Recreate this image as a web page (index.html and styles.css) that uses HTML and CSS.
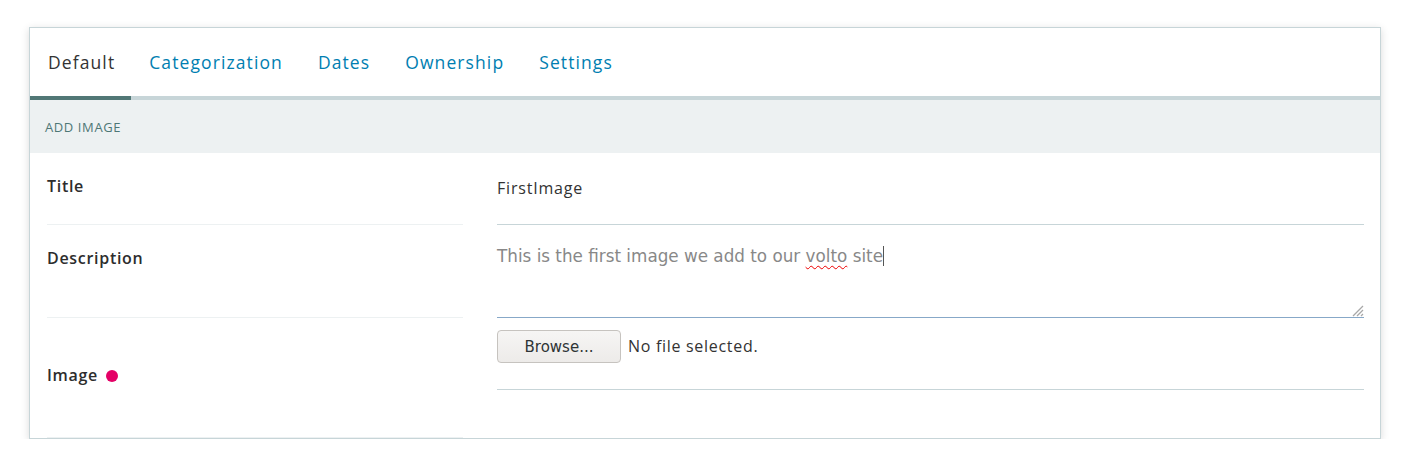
FILE: index.html
```html
<!DOCTYPE html>
<html>
<head>
<meta charset="utf-8">
<link rel="stylesheet" href="styles.css">
</head>
<body>
<div class="card">
  <div class="tabs">
    <div class="tab active">Default</div>
    <div class="tab">Categorization</div>
    <div class="tab">Dates</div>
    <div class="tab">Ownership</div>
    <div class="tab">Settings</div>
  </div>
  <div class="section-head">ADD IMAGE</div>
  <div class="form">
    <div class="row row-title">
      <div class="label">Title</div>
      <div class="field"><div class="text-input">FirstImage</div></div>
    </div>
    <div class="row row-desc">
      <div class="label">Description</div>
      <div class="field">
        <div class="textarea"><span class="ta-text">This is the first image we add to our <span class="spell">volto</span> site</span><span class="caret"></span>
          <svg class="grip" width="14" height="14" viewBox="0 0 14 14"><path d="M13 3 L3 13 M13 7 L7 13 M13 11 L11 13" stroke="#a8a8a8" stroke-width="1.3"/></svg>
        </div>
      </div>
    </div>
    <div class="row row-image">
      <div class="label">Image <span class="req"></span></div>
      <div class="field">
        <div class="file-line"><span class="browse">Browse...</span><span class="nofile">No file selected.</span></div>
      </div>
    </div>
  </div>
</div>
</body>
</html>
```
FILE: styles.css
```css
* { box-sizing: border-box; }
body {
  margin: 0;
  background: #fff;
  font-family: "Open Sans", "DejaVu Sans", sans-serif;
}
.card {
  margin: 27px 0 0 29px;
  width: 1352px;
  height: 412px;
  border: 1px solid #c7d5d8;
  background: #fff;
  box-shadow: 0 2px 8px rgba(0, 0, 0, 0.15);
}
.tabs {
  display: flex;
  height: 72px;
  border-bottom: 4px solid #c7d5d8;
}
.tab {
  padding: 0 17px 0 18px;
  height: 72px;
  display: flex;
  align-items: center;
  font-size: 17.5px;
  letter-spacing: 1.1px;
  color: #007eb1;
  margin-bottom: -4px;
  border-bottom: 4px solid transparent;
}
.tab.active {
  color: #333;
  border-bottom-color: #517776;
  padding-right: 16px;
}
.section-head {
  height: 53px;
  background: #edf1f2;
  color: #4e7776;
  font-size: 13px;
  letter-spacing: 0.6px;
  padding-left: 15px;
  display: flex;
  align-items: center;
}
.form {
  padding: 0 16px 0 17px;
}
.row {
  display: grid;
  grid-template-columns: 416px 1fr;
  column-gap: 34px;
}
.label {
  font-size: 16px;
  font-weight: 600;
  letter-spacing: 0.7px;
  color: #2d2d2d;
  border-bottom: 1px solid #edf1f2;
}
.row-title .label { height: 72px; padding-top: 22px; }
.row-desc .label { height: 93px; padding-top: 22px; }
.row-image .label { height: 120px; padding-top: 46px; display: flex; align-items: flex-start; gap: 8px; }
.req {
  display: inline-block;
  width: 12px;
  height: 12px;
  border-radius: 50%;
  background: #e40166;
  margin-top: 6px;
}
.text-input {
  height: 72px;
  border-bottom: 1px solid #c7d5d8;
  font-size: 16px;
  letter-spacing: 0.8px;
  color: #333;
  padding-top: 24px;
}
.textarea {
  position: relative;
  height: 93px;
  border-bottom: 1px solid #87a8c8;
  padding-top: 21px;
  font-family: "DejaVu Sans", sans-serif;
  font-size: 16.8px;
  color: #888;
}
.spell {
  text-decoration: underline wavy #e00;
  text-decoration-thickness: 1px;
  text-underline-offset: 3px;
}
.caret {
  display: inline-block;
  width: 1px;
  height: 20px;
  background: #555;
  vertical-align: -4px;
}
.grip {
  position: absolute;
  right: 0;
  bottom: 0;
}
.file-line {
  height: 72px;
  border-bottom: 1px solid #c7d5d8;
  padding-top: 12px;
  display: flex;
  align-items: flex-start;
  gap: 7px;
}
.browse {
  width: 124px;
  height: 33px;
  border: 1px solid #c6c3bf;
  border-radius: 4px;
  background: linear-gradient(#f6f5f4, #edebe9);
  font-family: "DejaVu Sans", sans-serif;
  font-size: 15px;
  color: #2e3436;
  display: flex;
  align-items: center;
  justify-content: center;
}
.nofile {
  font-size: 16px;
  letter-spacing: 0.7px;
  color: #333;
  line-height: 33px;
}
```
